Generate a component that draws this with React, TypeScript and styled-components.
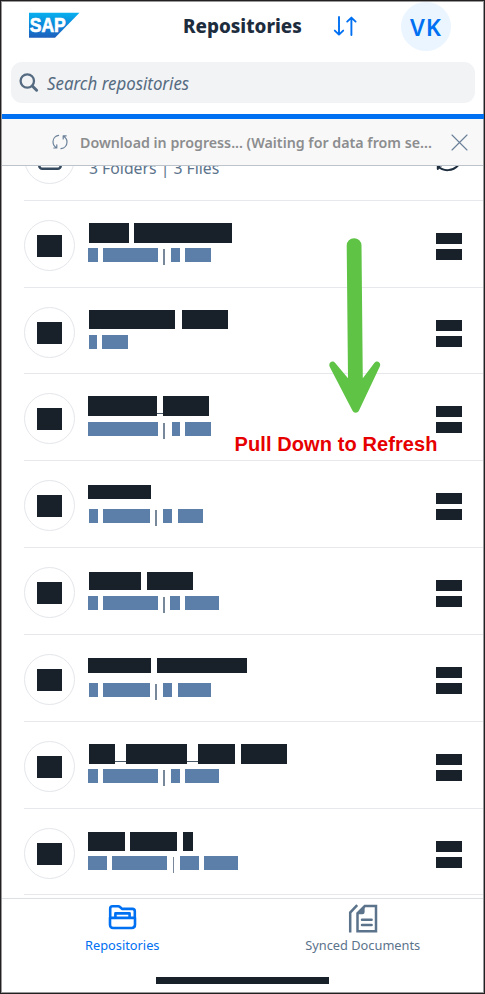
import React from "react";
import styled, { createGlobalStyle } from "styled-components";

const GlobalStyle = createGlobalStyle`
  * { box-sizing: border-box; }
  body { margin: 0; background: #fff; }
`;

const ink = "#18212a";
const slate = "#5b738b";
const blue = "#0070f2";
const steel = "#5b7fa8";

const Phone = styled.div`
  position: relative;
  width: 485px;
  height: 994px;
  display: flex;
  flex-direction: column;
  overflow: hidden;
  background: #fff;
  border: 1px solid #232021;
  border-bottom-width: 1.5px;
  box-shadow: inset 0 0 0 1px #98979a;
  font-family: "Noto Sans", "Open Sans", sans-serif;
`;

const Fit = styled.span<{ $scale: number }>`
  display: inline-block;
  white-space: nowrap;
  transform: scaleX(${(p) => p.$scale});
  transform-origin: left center;
`;

const Header = styled.header`
  height: 61px;
  flex: none;
  display: grid;
  grid-template-columns: 181.5px 150.5px 68px 1fr;
  align-items: start;
`;

const LogoCell = styled.div`
  padding: 11px 0 0 28px;
`;

const Title = styled.h1`
  margin: 11px 0 0;
  width: 120px;
  font-size: 19px;
  line-height: 28px;
  font-weight: 800;
  color: #1d2d3e;
`;

const SortButton = styled.button`
  margin: 14px 0 0;
  padding: 0;
  width: 24px;
  height: 22px;
  border: 0;
  background: none;
  display: flex;
`;

const UserBadge = styled.div`
  margin-top: 1px;
  width: 50px;
  height: 49px;
  border-radius: 50%;
  background: #ebf5ff;
  color: ${blue};
  display: flex;
  align-items: center;
  justify-content: center;
  font-size: 23.5px;
  font-weight: 600;
  letter-spacing: 1px;
`;

const SearchBox = styled.div`
  flex: none;
  margin: 0 9px 0 9.5px;
  height: 41px;
  border-radius: 11px;
  background: #f2f3f5;
  display: flex;
  align-items: center;
  padding-left: 8.5px;
  gap: 7.5px;
  font-size: 17.5px;
  font-style: italic;
  color: #556b81;
`;

const Progress = styled.div`
  flex: none;
  margin: 11px 0 0 1px;
  height: 5px;
  background: ${blue};
`;

const Banner = styled.div`
  flex: none;
  margin: 0 1px;
  height: 47px;
  background: #f8f8f8;
  border-bottom: 1px solid #bcc3ca;
  display: grid;
  grid-template-columns: 78px 370.5px 1fr;
  align-items: center;
  color: #8c8d8f;
  font-size: 15px;
  font-weight: 600;
`;

const BannerIcon = styled.span`
  display: flex;
  padding-left: 50px;
`;

const List = styled.main`
  flex: none;
  height: 732px;
  overflow: hidden;
  margin: 0 1px;
`;

const Row = styled.section<{ $height: number }>`
  height: ${(p) => p.$height}px;
  margin-left: 22px;
  border-bottom: 1px solid #e6e8ec;
  display: grid;
  grid-template-columns: 63.5px 1fr 48px;
`;

const PartialRow = styled(Row)`
  margin-top: -52px;
`;

const Avatar = styled.div`
  width: 51px;
  height: 51px;
  margin-top: 19px;
  border: 1px solid #e4e6ea;
  border-radius: 50%;
  display: flex;
  align-items: center;
  justify-content: center;
`;

const AvatarBlock = styled.div`
  width: 25.5px;
  height: 22px;
  margin-top: 1px;
  background: ${ink};
`;

const Body = styled.div<{ $top: number }>`
  padding-top: ${(p) => p.$top}px;
`;

const Line = styled.div<{ $height: number; $gap?: number }>`
  display: flex;
  height: ${(p) => p.$height}px;
  margin-top: ${(p) => p.$gap ?? 0}px;
`;

const Block = styled.span<{ $before: number; $width: number; $color: string }>`
  flex: none;
  margin-left: ${(p) => p.$before}px;
  width: ${(p) => p.$width}px;
  background: ${(p) => p.$color};
`;

const Pipe = styled.span<{ $before: number }>`
  flex: none;
  margin: 1px 0 -2px ${(p) => p.$before}px;
  width: 1.5px;
  height: 16px;
  background: #76889a;
`;

const Underscore = styled.span<{ $width: number }>`
  flex: none;
  align-self: flex-end;
  width: ${(p) => p.$width}px;
  height: 1px;
  margin-bottom: 2px;
  background: #4a5968;
`;

const Summary = styled.div`
  height: 22px;
  padding-left: 1px;
  font-size: 16px;
  line-height: 22px;
  color: ${slate};
`;

const Handle = styled.div`
  padding-top: 32px;
  margin-left: 0.6px;
  display: flex;
  flex-direction: column;
  gap: 4.5px;
`;

const HandleBar = styled.span`
  width: 26px;
  height: 11px;
  background: ${ink};
`;

const PartialSync = styled.div`
  padding-top: 36px;
`;

const TabBar = styled.nav`
  flex: none;
  height: 79px;
  margin: 0 1px;
  border-top: 1px solid #dcdfe3;
  display: grid;
  grid-template-columns: 1fr 1fr;
`;

const Tab = styled.div<{ $active?: boolean }>`
  display: flex;
  flex-direction: column;
  align-items: center;
  padding-top: 5px;
  color: ${(p) => (p.$active ? blue : slate)};
  font-size: 12.8px;
  line-height: 20px;
`;

const TabIcon = styled.span`
  height: 31px;
  display: flex;
`;

const HomeBar = styled.div`
  flex: none;
  width: 173px;
  height: 7px;
  margin-left: 155px;
  background: ${ink};
`;

const ArrowOverlay = styled.div`
  position: absolute;
  left: 327px;
  top: 236px;
`;

const Hint = styled.div`
  position: absolute;
  left: 233.5px;
  top: 432px;
  font: bold 20px/22px "Liberation Sans", Arial, sans-serif;
  letter-spacing: 0.1px;
  color: #e60000;
  white-space: nowrap;
`;

/** [start, end] in list coordinates, "|" is a divider and "_" a joining underscore. */
type Span = [number, number] | ["|", number] | ["_", number];

interface Repo {
  height: number;
  top: number;
  titleHeight: number;
  title: Span[];
  gap: number;
  meta: Span[];
}

const LEFT = 87.5;

const repos: Repo[] = [
  { height: 87, top: 22, titleHeight: 19.5, gap: 5.5, title: [[88.5, 128.5], [134, 232.3]], meta: [[87.5, 98], [102.5, 157.5], ["|", 163.3], [171, 180], [185.5, 211.4]] },
  { height: 86, top: 22.4, titleHeight: 19, gap: 5.5, title: [[88.5, 175], [181.5, 228]], meta: [[88.7, 97.5], [102.5, 128.4]] },
  { height: 87, top: 22, titleHeight: 20, gap: 6, title: [[87.5, 157.3], ["_", 157.3], [162.7, 209]], meta: [[87.5, 157.5], ["|", 163.3], [171.6, 180], [185.5, 211.4]] },
  { height: 87, top: 23.5, titleHeight: 14.5, gap: 9.5, title: [[87.5, 151.4]], meta: [[88.5, 97.5], [102.5, 150], ["|", 155.3], [163.5, 172.5], [178, 203.4]] },
  { height: 87, top: 23.5, titleHeight: 18.5, gap: 5.5, title: [[88.5, 141], [147, 193.4]], meta: [[88, 97.5], [102.5, 157.5], ["|", 163.3], [170.5, 180.5], [185.5, 219]] },
  { height: 87, top: 22.5, titleHeight: 15.5, gap: 9.5, title: [[87.5, 151.4], [156.7, 247]], meta: [[88.5, 97.5], [102.5, 150], ["|", 155.3], [163.5, 172.5], [178, 211.4]] },
  { height: 87, top: 22, titleHeight: 19.5, gap: 5.5, title: [[88.5, 115.3], ["_", 115.3], [126, 187.3], ["_", 187.3], [197.7, 235.4], [240.7, 287]], meta: [[87.5, 98], [102.5, 157.5], ["|", 163.3], [171, 180], [185.5, 219]] },
  { height: 86, top: 23, titleHeight: 18.5, gap: 5.5, title: [[87.5, 125], [130, 177], [183, 193.4]], meta: [[88, 107], [112, 166.5], ["|", 172.6], [180.5, 199], [204.5, 238]] },
];

function Spans({ items, color }: { items: Span[]; color: string }) {
  let cursor = LEFT;
  return (
    <>
      {items.map((item, i) => {
        const kind = item[0];
        if (kind === "|") {
          const before = item[1] - cursor;
          cursor = item[1] + 1.5;
          return <Pipe key={i} $before={before} />;
        }
        if (kind === "_") {
          const next = items[i + 1][0] as number;
          cursor = next;
          return <Underscore key={i} $width={next - item[1]} />;
        }
        const before = (kind as number) - cursor;
        cursor = item[1];
        return <Block key={i} $before={before} $width={item[1] - (kind as number)} $color={color} />;
      })}
    </>
  );
}

const SapLogo = () => (
  <svg width="51" height="26" viewBox="0 0 51 26">
    <defs>
      <linearGradient id="sap" x1="0" y1="0" x2="0" y2="1">
        <stop offset="0" stopColor="#08b1ee" />
        <stop offset="0.55" stopColor="#0d82d8" />
        <stop offset="1" stopColor="#1e5fbb" />
      </linearGradient>
    </defs>
    <path d="M0 .7H50.5L26 25.7H0Z" fill="url(#sap)" />
    <text x="0.8" y="20.3" fontFamily="Liberation Sans, Arial, sans-serif" fontWeight="700" fontSize="20" textLength="36" lengthAdjust="spacingAndGlyphs" fill="#fff" stroke="#fff" strokeWidth=".7">SAP</text>
  </svg>
);

const SortIcon = () => (
  <svg width="24" height="22" viewBox="0 0 24 22" fill="none" stroke={blue} strokeWidth="1.9" strokeLinecap="round" strokeLinejoin="round">
    <path d="M6 2V19.4M1.8 15.6L6 19.6L10.2 15.6M18.4 20V2.8M14.2 6.6L18.4 2.6L22.6 6.6" />
  </svg>
);

const SearchIcon = () => (
  <svg width="20" height="20" viewBox="0 0 20 20" fill="none" stroke="#556b81" strokeLinecap="round">
    <circle cx="8.3" cy="8" r="6.7" strokeWidth="2.3" />
    <path d="M13.3 13L17.6 17.2" strokeWidth="3" />
  </svg>
);

const SyncIcon = () => (
  <svg width="16" height="16" viewBox="0 0 16 16" fill="none" stroke="#6b8099" strokeWidth="1.2" strokeLinecap="round" strokeLinejoin="round">
    <path d="M6.6 1.3C3.2 1.8 1 4.6 1 7.8C1 10.3 2.2 12.4 4.5 13.8M4.8 10.8V14H1.8" />
    <path d="M9 14.7C12.6 14.2 15 11.3 15 8C15 5.6 13.6 3.4 11.5 2.2M14.2 1.8H11.2V5" />
  </svg>
);

const CloseIcon = () => (
  <svg width="17" height="17" viewBox="0 0 17 17" stroke="#6b8099" strokeWidth="1.15" strokeLinecap="round">
    <path d="M1 1L16 16M16 1L1 16" />
  </svg>
);

const CardIcon = () => (
  <svg width="24" height="24" viewBox="0 0 24 24" fill="none" stroke="#354a5f" strokeWidth="2.6">
    <rect x="1.3" y="3.2" width="21.4" height="18.6" rx="3" />
  </svg>
);

const RefreshIcon = () => (
  <svg width="26" height="26" viewBox="0 0 26 26" fill="none" stroke="#1d2d3e" strokeWidth="2" strokeLinecap="round">
    <path d="M2.8 19V15.6H6M3 16.4C8 21.6 18 21.6 23.4 15" />
  </svg>
);

const FolderIcon = () => (
  <svg width="29" height="26" viewBox="0 0 29 26" fill="none" stroke="currentColor" strokeWidth="2.6" strokeLinejoin="round">
    <path d="M2.2 13.6V4.4Q2.2 2.2 4.4 2.2H10.2Q11.2 2.2 12 3L14 4.9H24.4Q26.8 4.9 26.8 7.3V13.6" />
    <path d="M2 13.9H27V20.6Q27 24 23.8 24H5.2Q2 24 2 20.6Z" />
    <path d="M7.4 13V9.4H21.6V13" />
  </svg>
);

const DocsIcon = () => (
  <svg width="30" height="29" viewBox="0 0 30 29" fill="none" stroke="currentColor" strokeWidth="2.5">
    <path d="M2.2 28.5V8.6L9.2 1.2" />
    <path d="M9.5 27.2V9.3L16.8 2H28V27.2Z" />
    <path d="M9 10.2H14.5Q16.6 10.2 16.6 8V2L9 9.5Z" fill="currentColor" stroke="none" />
    <path d="M14 15.7H23.6M14 21H23.6" strokeLinecap="round" />
  </svg>
);

const DownArrow = () => (
  <svg width="56" height="180" viewBox="0 0 56 180" fill="#5fc445">
    <path d="M18.7 8.6A7.4 7.4 0 0 1 33.5 8.6L34.8 141.3L46.5 125.8C49 122.6 53.6 125.6 51.8 129.4L31 173.6C29.4 176.5 26 176.5 24.4 173.6L1.8 130C-.2 126 4.4 122.6 7 125.8L20 141.3Z" />
  </svg>
);

export default function App() {
  return (
    <>
      <GlobalStyle />
      <Phone>
        <Header>
          <LogoCell><SapLogo /></LogoCell>
          <Title><Fit $scale={0.99}>Repositories</Fit></Title>
          <SortButton aria-label="Sort"><SortIcon /></SortButton>
          <UserBadge>VK</UserBadge>
        </Header>
        <SearchBox>
          <SearchIcon />
          <Fit $scale={0.963}>Search repositories</Fit>
        </SearchBox>
        <Progress />
        <Banner>
          <BannerIcon><SyncIcon /></BannerIcon>
          <Fit $scale={0.949}>Download in progress... (Waiting for data from se...</Fit>
          <CloseIcon />
        </Banner>
        <List>
          <PartialRow $height={87}>
            <Avatar><CardIcon /></Avatar>
            <Body $top={43}><Summary><Fit $scale={0.985}>3 Folders | 3 Files</Fit></Summary></Body>
            <PartialSync><RefreshIcon /></PartialSync>
          </PartialRow>
          {repos.map((repo, i) => (
            <Row key={i} $height={repo.height}>
              <Avatar><AvatarBlock /></Avatar>
              <Body $top={repo.top}>
                <Line $height={repo.titleHeight}><Spans items={repo.title} color={ink} /></Line>
                <Line $height={14} $gap={repo.gap}><Spans items={repo.meta} color={steel} /></Line>
              </Body>
              <Handle><HandleBar /><HandleBar /></Handle>
            </Row>
          ))}
        </List>
        <TabBar>
          <Tab $active><TabIcon><FolderIcon /></TabIcon>Repositories</Tab>
          <Tab><TabIcon><DocsIcon /></TabIcon>Synced Documents</Tab>
        </TabBar>
        <HomeBar />
        <ArrowOverlay><DownArrow /></ArrowOverlay>
        <Hint>Pull Down to Refresh</Hint>
      </Phone>
    </>
  );
}
